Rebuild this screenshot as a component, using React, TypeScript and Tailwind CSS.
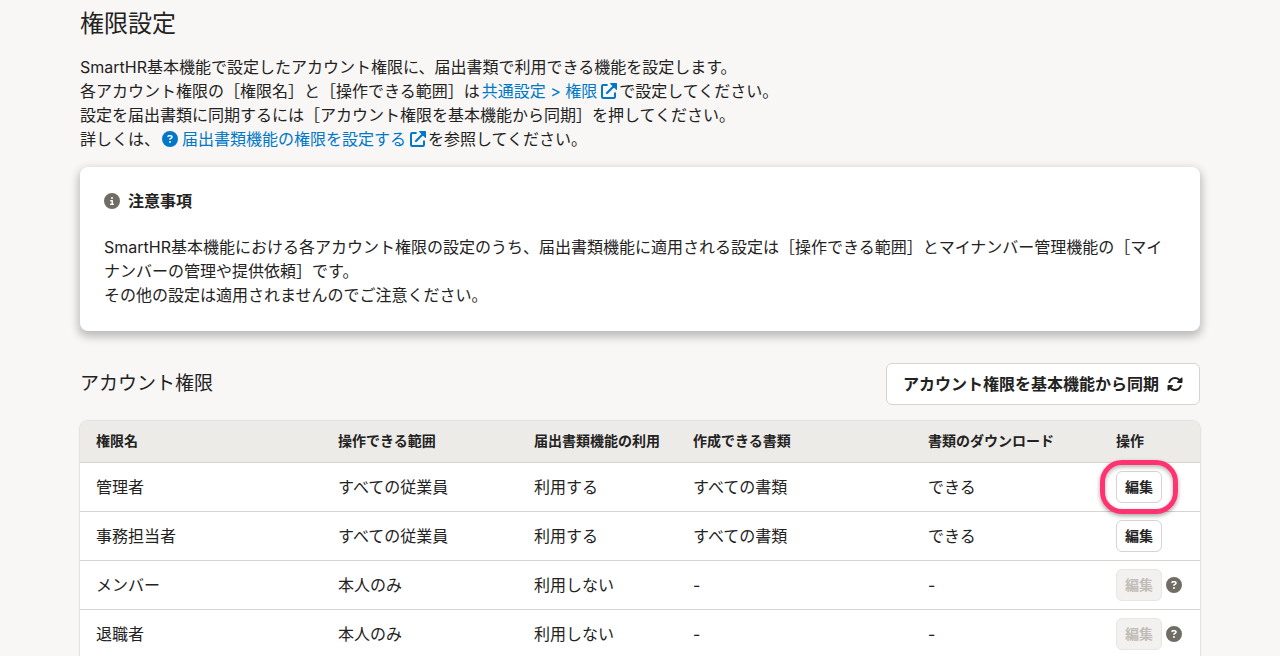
import React from "react";
import { FaCircleInfo, FaCircleQuestion, FaRotate } from "react-icons/fa6";

type Row = {
  name: string;
  scope: string;
  usage: string;
  documents: string;
  download: string;
  editable: boolean;
  highlighted?: boolean;
};

const columns = [
  { label: "権限名", width: "w-[242px]" },
  { label: "操作できる範囲", width: "w-[196px]" },
  { label: "届出書類機能の利用", width: "w-[159px]" },
  { label: "作成できる書類", width: "w-[235px]" },
  { label: "書類のダウンロード", width: "w-[188px]" },
  { label: "操作", width: "w-[100px]" },
];

const rows: Row[] = [
  { name: "管理者", scope: "すべての従業員", usage: "利用する", documents: "すべての書類", download: "できる", editable: true, highlighted: true },
  { name: "事務担当者", scope: "すべての従業員", usage: "利用する", documents: "すべての書類", download: "できる", editable: true },
  { name: "メンバー", scope: "本人のみ", usage: "利用しない", documents: "-", download: "-", editable: false },
  { name: "退職者", scope: "本人のみ", usage: "利用しない", documents: "-", download: "-", editable: false },
];

function ExternalLinkIcon() {
  return (
    <svg viewBox="0 0 16 16" aria-hidden="true" className="ml-1 inline size-4 align-[-2px]">
      <path
        d="M6.6 2H2.2Q1 2 1 3.2V13.8Q1 15 2.2 15H12.8Q14 15 14 13.8V9.4"
        fill="none"
        stroke="currentColor"
        strokeWidth="2"
      />
      <path d="M6 10L12.5 3.5" fill="none" stroke="currentColor" strokeWidth="2.2" strokeLinecap="round" />
      <path d="M9.6 0H15.4Q16 0 16 .6V6.4Q16 7.4 15.2 6.7L9.3 .9Q8.6 0 9.6 0Z" fill="currentColor" />
    </svg>
  );
}

function EditCell({ row }: { row: Row }) {
  return (
    <div className="flex items-center gap-1">
      <div className="relative flex">
        <button
          type="button"
          disabled={!row.editable}
          aria-label={`${row.name}を編集`}
          className="h-8 w-[46px] rounded-md border border-[#d6d3d0] bg-white text-sm leading-none font-bold whitespace-nowrap disabled:border-[#e8e6e3] disabled:bg-[#f2f1f0] disabled:text-[#c1bdb7]"
        >
          編集
        </button>
        {row.highlighted && (
          <span className="pointer-events-none absolute -inset-x-4 -inset-y-[11px] rounded-[22px] border-5 border-[#ff3370] shadow-[0_2px_4px_rgba(0,0,0,0.35),inset_0_2px_4px_rgba(0,0,0,0.3)]" />
        )}
      </div>
      {!row.editable && <FaCircleQuestion className="size-4 shrink-0 text-[#706d65]" />}
    </div>
  );
}

export default function App() {
  return (
    <main className="min-h-screen bg-[#f8f7f6] px-20 pt-2 font-[Inter,'Noto_Sans_CJK_JP',sans-serif] text-base leading-6 text-[#23221e]">
      <h1 className="text-2xl leading-8">権限設定</h1>

      <p className="mt-[15px]">
        SmartHR基本機能で設定したアカウント権限に、届出書類で利用できる機能を設定します。
        <br />
        各アカウント権限の［権限名］と［操作できる範囲］は
        <a href="#permissions" className="mx-0.5 text-[#0077c7]">
          共通設定 &gt; 権限
          <ExternalLinkIcon />
        </a>
        で設定してください。
        <br />
        設定を届出書類に同期するには［アカウント権限を基本機能から同期］を押してください。
        <br />
        詳しくは、
        <a href="#help" className="mx-0.5 text-[#0077c7]">
          <FaCircleQuestion className="mr-1 inline size-4 align-[-2px]" />
          届出書類機能の権限を設定する
          <ExternalLinkIcon />
        </a>
        を参照してください。
      </p>

      <section className="mt-4 rounded-lg bg-white p-6 shadow-[0_4px_8px_2px_rgba(0,0,0,0.24)]">
        <h2 className="flex items-center gap-2 leading-5 font-bold">
          <FaCircleInfo className="size-4 text-[#706d65]" />
          注意事項
        </h2>
        <p className="mt-6">
          SmartHR基本機能における各アカウント権限の設定のうち、届出書類機能に適用される設定は［操作できる範囲］とマイナンバー管理機能の［マイナンバーの管理や提供依頼］です。
          <br />
          その他の設定は適用されませんのでご注意ください。
        </p>
      </section>

      <section className="mt-8">
        <div className="flex items-center justify-between">
          <h2 className="text-[19px] leading-6">アカウント権限</h2>
          <button
            type="button"
            className="flex items-center gap-2 rounded-md border border-[#d6d3d0] bg-white px-4 py-2 font-bold"
          >
            アカウント権限を基本機能から同期
            <FaRotate className="size-4" />
          </button>
        </div>

        <div className="mt-4 overflow-hidden rounded-t-lg bg-white shadow-[0_0_2px_rgba(3,3,2,0.3)]">
          <table className="w-full table-fixed border-collapse text-left">
            <thead className="bg-[#edebe8] text-sm leading-5">
              <tr className="h-[41px]">
                {columns.map((column) => (
                  <th key={column.label} scope="col" className={`${column.width} pl-4 font-bold whitespace-nowrap`}>
                    {column.label}
                  </th>
                ))}
              </tr>
            </thead>
            <tbody>
              {rows.map((row) => (
                <tr key={row.name} className="border-t border-[#d6d3d0]">
                  <td className="pl-4">{row.name}</td>
                  <td className="pl-4">{row.scope}</td>
                  <td className="pl-4">{row.usage}</td>
                  <td className="pl-4">{row.documents}</td>
                  <td className="pl-4">{row.download}</td>
                  <td className="py-2 pl-4">
                    <EditCell row={row} />
                  </td>
                </tr>
              ))}
            </tbody>
          </table>
        </div>
      </section>
    </main>
  );
}
